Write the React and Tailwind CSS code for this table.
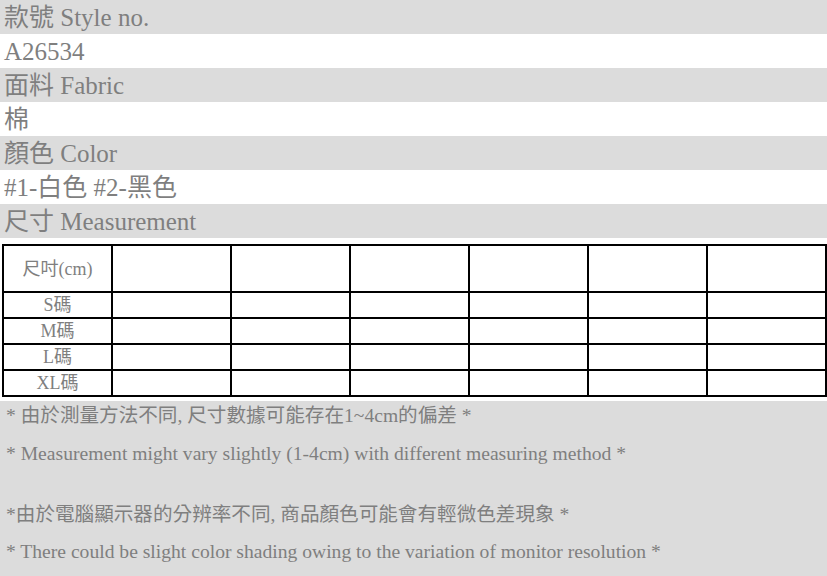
const font = { fontFamily: '"Liberation Serif", "Noto Sans CJK TC", serif' }

const infoRows = [
  { text: '款號 Style no.', gray: true },
  { text: 'A26534', gray: false },
  { text: '面料 Fabric', gray: true },
  { text: '棉', gray: false },
  { text: '顏色 Color', gray: true },
  { text: '#1-白色 #2-黑色', gray: false },
  { text: '尺寸 Measurement', gray: true },
]

const sizes = ['S碼', 'M碼', 'L碼', 'XL碼']
const emptyCols = [1, 2, 3, 4, 5, 6]

const notes = [
  { text: '* 由於測量方法不同, 尺寸數據可能存在1~4cm的偏差 *', cls: '' },
  { text: '* Measurement might vary slightly (1-4cm) with different measuring method *', cls: 'mt-[8px]' },
  { text: '*由於電腦顯示器的分辨率不同, 商品顏色可能會有輕微色差現象 *', cls: 'mt-[31px]' },
  { text: '* There could be slight color shading owing to the variation of monitor resolution *', cls: 'mt-[7px]' },
]

export default function App() {
  return (
    <div className="w-[827px] h-[576px] bg-white overflow-hidden text-[#7f7f7f]" style={font}>
      {/* Product info rows */}
      {infoRows.map((row, i) => (
        <div
          key={i}
          className={`h-[34px] flex items-center pl-[4px] text-[25px] leading-none ${row.gray ? 'bg-[#dcdcdc]' : 'bg-white'}`}
        >
          {row.text}
        </div>
      ))}

      {/* Size table */}
      <div className="pt-[6px] pl-[2px] pr-[1px]">
        <table className="w-[824px] border-collapse table-fixed">
          <colgroup>
            <col className="w-[109px]" />
            {emptyCols.map((c) => (
              <col key={c} className="w-[119px]" />
            ))}
          </colgroup>
          <tbody>
            <tr className="h-[47px]">
              <td className="border-2 border-black text-center text-[18px] leading-none">尺吋(cm)</td>
              {emptyCols.map((c) => (
                <td key={c} className="border-2 border-black" />
              ))}
            </tr>
            {sizes.map((s) => (
              <tr key={s} className="h-[26px]">
                <td className="border-2 border-black text-center text-[18px] leading-none">{s}</td>
                {emptyCols.map((c) => (
                  <td key={c} className="border-2 border-black" />
                ))}
              </tr>
            ))}
          </tbody>
        </table>
      </div>

      {/* Notes */}
      <div className="mt-[4px] bg-[#dcdcdc] h-[200px] pl-[6px] text-[19.6px] flex flex-col">
        {notes.map((n, i) => (
          <div key={i} className={`h-[30px] flex items-center whitespace-nowrap ${n.cls}`}>
            {n.text}
          </div>
        ))}
      </div>
    </div>
  )
}
